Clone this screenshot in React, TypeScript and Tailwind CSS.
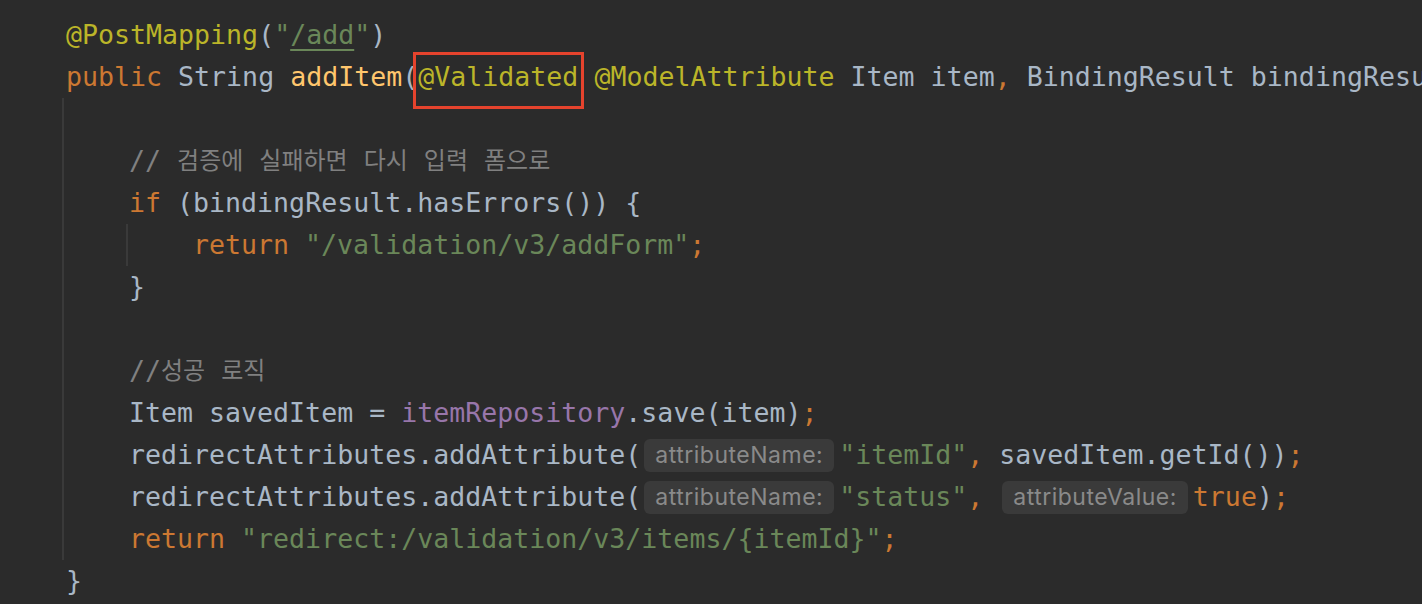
import { ReactNode } from "react";

// Darcula-ish token colours
const ann = "text-[#bbb529]";
const kw = "text-[#cc7832]";
const fn = "text-[#ffc66d]";
const str = "text-[#6a8759]";
const cm = "text-[#808080]";
const fld = "text-[#9876aa]";

function Line({ children }: { children?: ReactNode }) {
    return <div className="flex h-[42px] items-center whitespace-pre">{children}</div>;
}

function Hint({ label }: { label: string }) {
    return (
        <span className="ml-[3px] mr-[5px] flex h-[33px] items-center rounded-[6px] bg-[#3a3a3a] px-[11px] font-['Inter',sans-serif] text-[23px] tracking-[0.5px] text-[#8a8a8a]">
            {label}
        </span>
    );
}

// korean words in a proportional CJK font, spaces stay monospaced
function Ko({ text }: { text: string }) {
    const words = text.split(" ");
    return (
        <>
            {words.map((w, i) => (
                <span key={i} className="flex">
                    {i > 0 && <span>{" "}</span>}
                    <span className="font-['Noto_Sans_CJK_KR',sans-serif] text-[24px]">{w}</span>
                </span>
            ))}
        </>
    );
}

export default function App() {
    return (
        <div className="h-[604px] w-full overflow-hidden bg-[#2b2b2b] pt-[14px] font-['DejaVu_Sans_Mono','Noto_Sans_CJK_KR',monospace] text-[26.6px] text-[#a9b7c6]">
            <div className="pl-[66px]">
                <Line>
                    <span className={ann}>@PostMapping</span>
                    <span>(</span>
                    <span className={str}>"</span>
                    <span className={str + " underline decoration-[#6a8759] decoration-2 underline-offset-[5px]"}>/add</span>
                    <span className={str}>"</span>
                    <span>)</span>
                </Line>
                <Line>
                    <span className={kw}>public </span>
                    <span>String </span>
                    <span className={fn}>addItem</span>
                    <span>(</span>
                    <span className="relative flex h-full items-center">
                        <span className={ann}>@Validated</span>
                        <span className="absolute -top-[4px] -bottom-[11px] -left-[5px] -right-[6px] border-[3px] border-[#e5432d]" />
                    </span>
                    <span> </span>
                    <span className={ann}>@ModelAttribute</span>
                    <span> Item item</span>
                    <span className={kw}>,</span>
                    <span> BindingResult bindingResult</span>
                    <span className={kw}>,</span>
                    <span> RedirectAttributes redirectAttributes) {"{"}</span>
                </Line>
            </div>

            {/* method body with its indent guide */}
            <div className="ml-[62px] border-l-2 border-[#3a3a3a] pl-[65px]">
                <Line />
                <Line>
                    <span className={cm}>// </span>
                    <span className={cm + " flex"}>
                        <Ko text="검증에 실패하면 다시 입력 폼으로" />
                    </span>
                </Line>
                <Line>
                    <span className={kw}>if</span>
                    <span> (bindingResult.hasErrors()) {"{"}</span>
                </Line>
                <div className="-ml-[3px] border-l-2 border-[#3a3a3a] pl-[65px]">
                    <Line>
                        <span className={kw}>return </span>
                        <span className={str}>"/validation/v3/addForm"</span>
                        <span className={kw}>;</span>
                    </Line>
                </div>
                <Line>
                    <span>{"}"}</span>
                </Line>
                <Line />
                <Line>
                    <span className={cm}>//</span>
                    <span className={cm + " flex"}>
                        <Ko text="성공 로직" />
                    </span>
                </Line>
                <Line>
                    <span>Item savedItem = </span>
                    <span className={fld}>itemRepository</span>
                    <span>.save(item)</span>
                    <span className={kw}>;</span>
                </Line>
                <Line>
                    <span>redirectAttributes.addAttribute(</span>
                    <Hint label="attributeName:" />
                    <span className={str}>"itemId"</span>
                    <span className={kw}>,</span>
                    <span> savedItem.getId())</span>
                    <span className={kw}>;</span>
                </Line>
                <Line>
                    <span>redirectAttributes.addAttribute(</span>
                    <Hint label="attributeName:" />
                    <span className={str}>"status"</span>
                    <span className={kw}>,</span>
                    <span> </span>
                    <Hint label="attributeValue:" />
                    <span className={kw}>true</span>
                    <span>)</span>
                    <span className={kw}>;</span>
                </Line>
                <Line>
                    <span className={kw}>return </span>
                    <span className={str}>"redirect:/validation/v3/items/{"{"}itemId{"}"}"</span>
                    <span className={kw}>;</span>
                </Line>
            </div>

            <div className="pl-[66px]">
                <Line>
                    <span>{"}"}</span>
                </Line>
            </div>
        </div>
    );
}
